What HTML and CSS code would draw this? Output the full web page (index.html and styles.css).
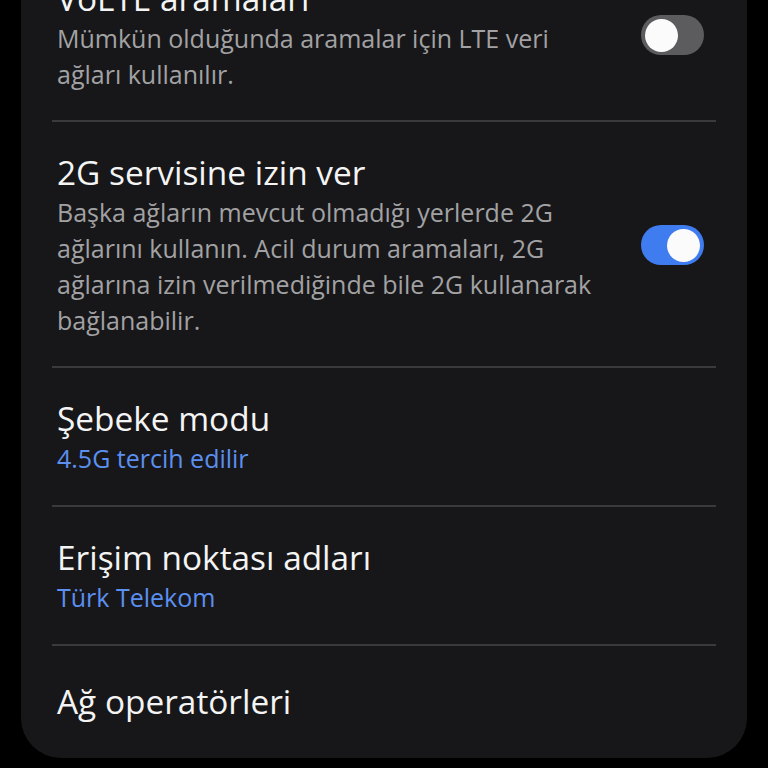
FILE: index.html
```html
<!DOCTYPE html>
<html lang="tr">
<head>
<meta charset="utf-8">
<link rel="stylesheet" href="styles.css">
</head>
<body>
<div class="screen">
  <div class="card">
    <div class="item">
      <div class="text">
        <div class="title">VoLTE aramaları</div>
        <div class="sub">Mümkün olduğunda aramalar için LTE veri ağları kullanılır.</div>
      </div>
      <div class="switch off"><span class="knob"></span></div>
    </div>
    <div class="item">
      <div class="text">
        <div class="title">2G servisine izin ver</div>
        <div class="sub">Başka ağların mevcut olmadığı yerlerde 2G ağlarını kullanın. Acil durum aramaları, 2G ağlarına izin verilmediğinde bile 2G kullanarak bağlanabilir.</div>
      </div>
      <div class="switch on"><span class="knob"></span></div>
    </div>
    <div class="item">
      <div class="text">
        <div class="title">Şebeke modu</div>
        <div class="sub accent">4.5G tercih edilir</div>
      </div>
    </div>
    <div class="item">
      <div class="text">
        <div class="title">Erişim noktası adları</div>
        <div class="sub accent">Türk Telekom</div>
      </div>
    </div>
    <div class="item last">
      <div class="text">
        <div class="title">Ağ operatörleri</div>
      </div>
    </div>
  </div>
</div>
</body>
</html>
```

FILE: styles.css
```css
html, body {
  margin: 0;
  padding: 0;
  background: #000;
}
.screen {
  width: 768px;
  height: 768px;
  overflow: hidden;
  font-family: "Open Sans", Roboto, sans-serif;
}
.card {
  margin: -52px 21px 0 21px;
  background: #171719;
  border-radius: 0 0 40px 40px;
  padding: 0 31px;
}
.item {
  display: flex;
  align-items: center;
  padding: 30px 12px 28px 5px;
}
.item + .item {
  border-top: 2px solid #3a3a3c;
}
.item.last {
  padding-top: 35px;
  padding-bottom: 37px;
}
.text {
  flex: 1;
  max-width: 550px;
}
.title {
  font-size: 33.4px;
  line-height: 40px;
  color: #f4f4f4;
}
.sub {
  margin-top: 3px;
  font-size: 25px;
  line-height: 35.7px;
  color: #a2a2a4;
}
.sub.accent {
  color: #5b8ff0;
}
.switch {
  margin-left: auto;
  width: 63px;
  height: 40px;
  border-radius: 20px;
  display: flex;
  align-items: center;
  padding: 0 4px;
  box-sizing: border-box;
}
.switch.off {
  background: #5c5c5f;
  justify-content: flex-start;
}
.switch.on {
  background: #3f7cf0;
  justify-content: flex-end;
}
.knob {
  width: 33px;
  height: 33px;
  border-radius: 50%;
  background: #fbfbfb;
}
```
